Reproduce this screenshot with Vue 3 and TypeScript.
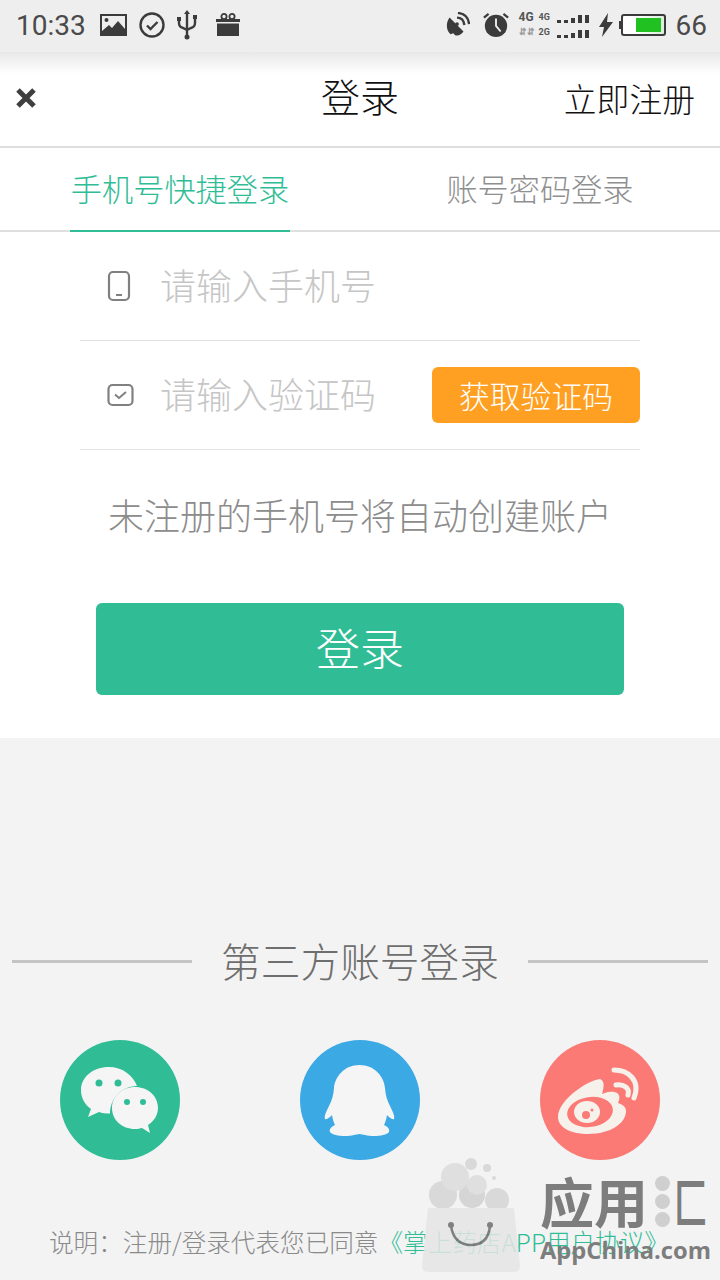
<template>
  <div class="page">
    <div class="status">
      <div class="status-left">
        <span class="clock">10:33</span>
        <svg class="si" width="27" height="22" viewBox="0 0 27 22"><path fill="#3b3b3b" fill-rule="evenodd" d="M0 0h27v22H0zM2 2v15l7-6 3 3 6-7 7 8V2z"/><circle cx="6.500" cy="6" r="2" fill="#3b3b3b"/></svg>
        <svg class="si" width="26" height="26" viewBox="0 0 26 26"><circle cx="13" cy="13" r="11.500" fill="none" stroke="#3b3b3b" stroke-width="2.400"/><path d="M8 13.500l3.500 3.500 7-7" fill="none" stroke="#3b3b3b" stroke-width="2.400"/></svg>
        <svg class="si" width="20" height="30" viewBox="0 0 20 30"><path d="M10 4v24M2 9v4q0 4 4 5l4 2 4-2q4-1 4-5V8" fill="none" stroke="#3b3b3b" stroke-width="2.400"/><path fill="#3b3b3b" d="M10 0l3 4H7zM0 7h4v4H0zM16 5h4v4h-4z"/><circle cx="10" cy="27" r="2.500" fill="#3b3b3b"/></svg>
        <svg class="si gift" width="26" height="24" viewBox="0 0 26 24"><path fill="#3b3b3b" d="M1 6h24v3H1zM2 10.500h22V23H2z"/><circle cx="9" cy="3.500" r="2.600" fill="none" stroke="#3b3b3b" stroke-width="1.800"/><circle cx="17" cy="3.500" r="2.600" fill="none" stroke="#3b3b3b" stroke-width="1.800"/></svg>
      </div>
      <div class="status-right">
        <svg class="dish" width="26" height="26" viewBox="0 0 28 28"><path fill="#3b3b3b" d="M6 6l15 15c-2 3-5 5-9 4l-2-2-3 1c-5-4-5-13-1-18z"/><path d="M14 6q7 0 8 8M15 1q11 1 12 12" fill="none" stroke="#3b3b3b" stroke-width="2.500"/><circle cx="14" cy="13" r="2" fill="#3b3b3b"/></svg>
        <svg class="alarm" width="26" height="28" viewBox="0 0 28 28"><circle cx="14" cy="15" r="12" fill="#3b3b3b"/><path d="M1 6l5-4M27 6l-5-4" stroke="#3b3b3b" stroke-width="2.400" fill="none"/><path d="M14 7v8l5 6" stroke="#efefef" stroke-width="2" fill="none"/></svg>
        <div class="signal">
          <div class="sig-row"><b class="g1">4G</b><b>4G</b><span class="bars"><i v-for="(h, n) in bars" :key="n" :style="{ height: h + 'px' }"></i></span></div>
          <div class="sig-row"><b class="arrows">⇵⇵</b><b>2G</b><span class="bars"><i v-for="(h, n) in bars" :key="n" :style="{ height: h + 'px' }"></i></span></div>
        </div>
        <svg class="bolt" width="14" height="24" viewBox="0 0 14 24"><path fill="#3b3b3b" d="M9 0L0 14h5l-2 10 11-15H8z"/></svg>
        <div class="battery"><span class="fill"></span></div>
        <span class="level">66</span>
      </div>
    </div>
    <div class="fade"></div>

    <div class="nav">
      <svg class="close" width="22" height="22" viewBox="0 0 22 22"><path d="M3 3l16 16M19 3L3 19" stroke="#3f3f3f" stroke-width="5"/></svg>
      <span class="title">登录</span>
      <span class="register">立即注册</span>
    </div>

    <div class="tabs">
      <div class="tab on"><span>手机号快捷登录</span></div>
      <div class="tab"><span>账号密码登录</span></div>
    </div>

    <div class="form">
      <div class="row">
        <svg class="ico phone" width="24" height="32" viewBox="0 0 24 32"><rect x="2" y="2" width="20" height="28" rx="4" fill="none" stroke="#808080" stroke-width="2.200"/><path d="M9 25h6" stroke="#808080" stroke-width="2"/></svg>
        <span class="ph">请输入手机号</span>
      </div>
      <div class="row">
        <svg class="ico" width="27" height="24" viewBox="0 0 27 24"><rect x="1.500" y="2" width="24" height="20" rx="4" fill="none" stroke="#808080" stroke-width="2.200"/><path d="M8 11.500l4 3.500 7-6" fill="none" stroke="#808080" stroke-width="2"/></svg>
        <span class="ph">请输入验证码</span>
        <button class="code">获取验证码</button>
      </div>
      <p class="hint">未注册的手机号将自动创建账户</p>
      <button class="submit">登录</button>
    </div>

    <div class="lower">
      <div class="divider"><span class="line"></span><span class="dtext">第三方账号登录</span><span class="line"></span></div>
      <div class="socials">
        <div class="circle wx">
          <svg width="120" height="120" viewBox="0 0 120 120">
            <path fill="#f5f5f5" d="M49 27C33 27 21 37 21 50c0 8 4 15 10 19l-3 8 11-5c3 1 7 1.500 11 1.500C50 60 60 46 77 46 73 35 62 27 49 27z"/>
            <circle cx="39" cy="43" r="3.500" fill="#30bd96"/><circle cx="58" cy="43" r="3.500" fill="#30bd96"/>
            <path fill="#f5f5f5" d="M75 47c-13 0-23 9-23 21s10 21 23 21c3 0 5-.5 7-1l8 5-2-8c6-4 10-10 10-17 0-12-10-21-23-21z"/>
            <circle cx="67" cy="62" r="3" fill="#30bd96"/><circle cx="83" cy="62" r="3" fill="#30bd96"/>
          </svg>
        </div>
        <div class="circle qq">
          <svg width="120" height="120" viewBox="0 0 120 120"><path fill="#f5f5f5" d="M59.500 25C75 25 84 37 85 48c.5 7 2 12 5 18 3 6 5 10 4 13-2 1-5-2-7-4-.5 4-2 8-3 10 4 2 6 4 5 7-3 4-16 5-24 3l-5.500-1-5.500 1c-8 2-21 1-24-3-1-3 1-5 5-7-1-2-2.500-6-3-10-2 2-5 5-7 4-1-3 1-7 4-13 3-6 4.500-11 5-18C35 37 44 25 59.500 25z"/></svg>
        </div>
        <div class="circle wb">
          <svg width="120" height="120" viewBox="0 0 120 120">
            <path fill="#f7f1ec" d="M60 39C48 40 18 60 18 77c0 11 14 17 30 17 23 0 38-11 38-23 0-5-5-7-8-8 2-4 2-8-1-10-5-3-13 0-15 1 2-7 3-13-2-15z"/>
            <ellipse cx="50" cy="72" rx="23" ry="15" fill="#fb7a76" transform="rotate(-8 50 72)"/>
            <ellipse cx="47" cy="72" rx="13" ry="11" fill="#f7f1ec"/>
            <circle cx="46" cy="75" r="4" fill="#fb7a76"/><circle cx="52" cy="70" r="1.500" fill="#fb7a76"/>
            <path d="M74 30c14 0 27 10 20 28M76 45c8-1 14 3 12 10" fill="none" stroke="#f7f1ec" stroke-width="5" stroke-linecap="round"/>
          </svg>
        </div>
      </div>
      <p class="terms">说明：注册/登录代表您已同意<em>《掌上药店APP用户协议》</em></p>
    </div>

    <!-- 水印 -->
    <div class="mark">
      <svg class="bag" width="100" height="114" viewBox="0 0 100 114">
        <circle cx="21" cy="37" r="14" fill="#d5d5d5"/><circle cx="50" cy="37" r="13" fill="#d0d0d0"/><circle cx="75" cy="42" r="12" fill="#d5d5d5"/>
        <circle cx="33" cy="19" r="14" fill="#dcdcdc"/><circle cx="55" cy="27" r="10" fill="#dcdcdc"/><circle cx="49" cy="6" r="6" fill="#d5d5d5"/><circle cx="65" cy="10" r="4" fill="#d5d5d5"/><circle cx="72" cy="20" r="2" fill="#d5d5d5"/>
        <path fill="#e6e6e6" d="M6 50h86l6 58q0 6-6 6H6q-6 0-6-6z"/>
        <path d="M29 68q3 19 20 19t19-19" fill="none" stroke="#6d6d6d" stroke-width="2.500"/>
        <circle cx="29" cy="67" r="3" fill="#6d6d6d"/><circle cx="68" cy="67" r="3" fill="#6d6d6d"/>
      </svg>
      <div class="brand">
        <div class="brand-top"><span>应用</span><span class="dots"><i></i><i></i><i></i></span><span class="hui">匚</span></div>
        <div class="brand-sub">AppChina.com</div>
      </div>
    </div>
  </div>
</template>

<script setup lang="ts">
const bars: number[] = [3, 3, 5, 8, 8]
</script>

<style>
html, body { margin: 0; background: #f3f3f3; }
</style>

<style scoped>
.page {
  position: relative;
  width: 720px;
  height: 1280px;
  overflow: hidden;
  background: #f3f3f3;
  font-family: "Noto Sans CJK SC", "Noto Sans", sans-serif;
  font-weight: 300;
}
.status {
  height: 52px;
  padding: 0 13px 2px 16px;
  display: flex;
  justify-content: space-between;
  align-items: center;
  background: #eee;
  box-sizing: border-box;
}
.status-left, .status-right { display: flex; align-items: center; }
.clock { font: 400 28px Roboto, sans-serif; color: #4a4a4a; margin-right: 14px; }
.si { margin-right: 12px; }
.gift { margin-left: 6px; }
.dish { margin-right: 13px; }
.signal { margin-left: 10px; width: 70px; display: flex; flex-direction: column; gap: 4px; }
.sig-row { display: flex; align-items: flex-end; height: 11px; }
.sig-row b { font: 700 9px Roboto, sans-serif; color: #555; margin-right: 3px; line-height: 11px; width: 12px; }
.sig-row .g1 { font-size: 12px; margin-right: 5px; width: 15px; }
.sig-row .arrows { font-size: 9px; color: #999; margin-right: 0; width: 20px; }
.bars { margin-left: auto; display: flex; align-items: flex-end; gap: 3px; }
.bars i { width: 4px; background: #3b3b3b; }
.bolt { margin-left: 10px; }
.battery {
  position: relative;
  width: 45px;
  height: 22px;
  margin-left: 8px;
  border: 2px solid #3b3b3b;
  border-radius: 3px;
  padding: 2px 3px 2px 0;
  box-sizing: border-box;
  display: flex;
  justify-content: flex-end;
  background: linear-gradient(90deg, #fff 30%, #d8f0d8);
}
.battery::before {
  content: "";
  position: absolute;
  left: -4px;
  top: 5px;
  width: 2px;
  height: 8px;
  background: #3b3b3b;
}
.fill { width: 25px; background: #22c122; }
.level { font: 400 28px Roboto, sans-serif; color: #4a4a4a; margin-left: 10px; }
.fade { height: 22px; background: linear-gradient(#e8e8e8, #fff); }

.nav {
  height: 72px;
  background: #fff;
  border-bottom: 2px solid #dedede;
  display: grid;
  grid-template-columns: 1fr auto 1fr;
  align-items: start;
  padding: 0 25px;
  box-sizing: content-box;
}
.close { margin: 13px 0 0 -10px; }
.title { font-size: 39px; color: #111; line-height: 48px; margin-top: -3px; }
.register { font-size: 32.800px; color: #111; line-height: 48px; justify-self: end; white-space: nowrap; }

.tabs {
  display: grid;
  grid-template-columns: 1fr 1fr;
  height: 82px;
  background: #fff;
  border-bottom: 2px solid #dfdfdf;
}
.tab { display: flex; justify-content: center; color: #8f8f8f; font-size: 31.200px; line-height: 80px; }
.tab span { display: block; height: 82px; padding: 0 1px; }
.tab.on { color: #30bd96; }
.tab.on span { border-bottom: 2px solid #30bd96; box-sizing: content-box; }

.form {
  background: #fff;
  height: 506px;
  padding: 0 80px;
  box-sizing: border-box;
}
.row {
  height: 108px;
  display: flex;
  align-items: center;
  border-bottom: 1px solid #e2e2e2;
  box-sizing: content-box;
  padding-left: 27px;
}
.ico { width: 27px; flex: none; }
.ico.phone { width: 24px; margin-right: 3px; }
.ph { font-size: 36px; color: #c6c6c6; margin-left: 26px; line-height: 48px; margin-top: -4px; }
.code {
  margin-left: auto;
  width: 208px;
  height: 56px;
  background: #ffa023;
  color: #fff;
  border: 0;
  border-radius: 6px;
  padding: 0;
  font: inherit;
  font-size: 30.800px;
  line-height: 56px;
}
.hint { margin: 38px 0 0; text-align: center; font-size: 36px; line-height: 52px; color: #8c8c8c; white-space: nowrap; }
.submit {
  display: block;
  width: 528px;
  height: 92px;
  margin: 63px 0 0 16px;
  background: #30bd96;
  color: #fff;
  border: 0;
  border-radius: 6px;
  font: inherit;
  font-size: 44px;
  padding: 0 0 4px;
}

.lower { position: relative; padding-top: 195px; }
.divider { display: flex; align-items: center; padding: 0 12px; justify-content: space-between; height: 56px; }
.line { width: 180px; height: 3px; background: #c4c4c4; }
.dtext { font-size: 39.700px; color: #6e6e6e; line-height: 54px; height: 56px; white-space: nowrap; }
.socials { display: flex; justify-content: space-between; padding: 0 60px; margin-top: 51px; }
.circle { width: 120px; height: 120px; border-radius: 50%; }
.wx { background: #30bd96; }
.qq { background: #3aa9e4; }
.wb { background: #fb7a76; }
.terms {
  margin: 62px 0 0;
  padding-left: 49px;
  font-size: 24.600px;
  line-height: 38px;
  color: #8a8a8a;
  white-space: nowrap;
}
.terms em { font-style: normal; color: #30bd96; }

.mark {
  position: absolute;
  left: 422px;
  top: 1158px;
  display: flex;
  pointer-events: none;
}
.bag { opacity: .85; flex: none; }
.brand { margin-left: 18px; margin-top: 14px; }
.brand-top { display: flex; align-items: center; height: 58px; font-size: 54px; line-height: 58px; font-weight: 700; color: #7d7d7d; white-space: nowrap; }
.hui { display: inline-block; width: 34px; transform: scaleX(.62); transform-origin: left center; }
.dots { display: flex; flex-direction: column; gap: 3px; margin: 0 4px 0 7px; }
.dots i { width: 15px; height: 15px; border-radius: 50%; background: #cfcfcf; }
.brand-sub { font: 700 23.700px "Open Sans", sans-serif; line-height: 30px; color: #7d7d7d; margin-top: 5px; white-space: nowrap; }
</style>
